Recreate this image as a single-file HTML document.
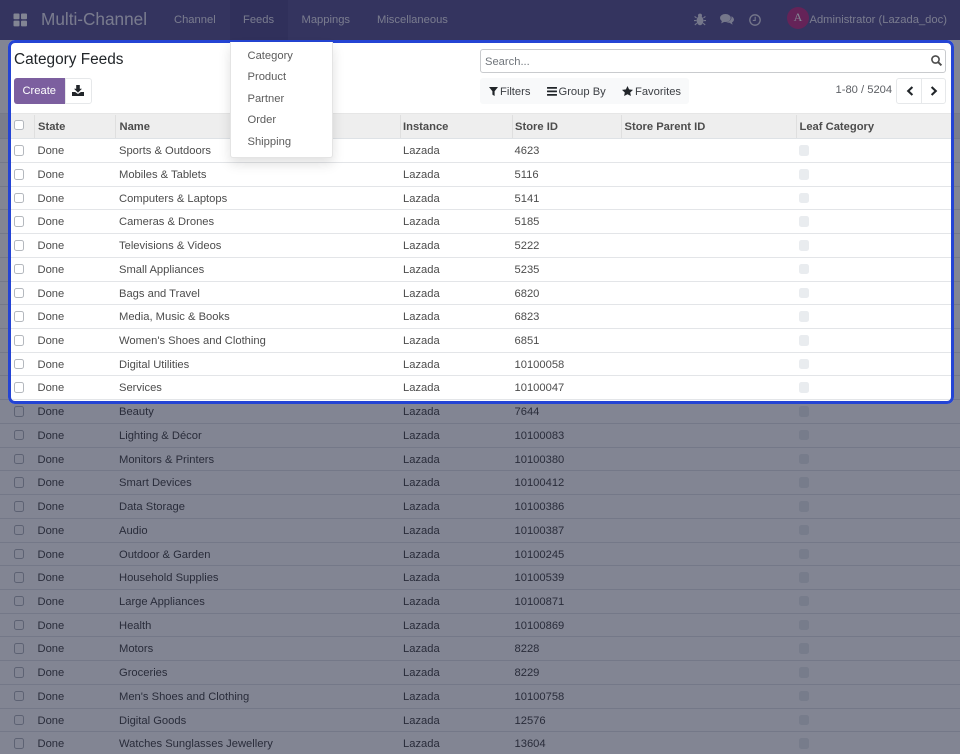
<!DOCTYPE html>
<html><head><meta charset="utf-8"><title>Category Feeds</title>
<style>
html,body{margin:0;padding:0;width:960px;height:754px;overflow:hidden;background:#fff}
*{box-sizing:border-box}
body{font-family:"Liberation Sans",sans-serif;font-size:11.2px;color:#4c4c4c;position:relative}
.abs,.abs2{position:absolute;white-space:nowrap}
#nav{position:absolute;left:0;top:0;width:960px;height:40px;background:#625c96;color:#fff}
#nav .abs{font-size:11.2px;line-height:41px;top:0;color:#eceaf4}
#t{position:absolute;left:0;top:139.3px;width:960px}
.r{height:23.73px;border-bottom:1px solid #e3e5e8;position:relative;background:#fff;line-height:24.6px}
.r span{position:absolute;top:0;white-space:nowrap}
.r .a{left:37.5px}.r .b{left:119px}.r .c{left:403px}.r .d{left:514.5px}
.cb{position:absolute;left:13.5px;top:6px;width:10.5px;height:10.5px;border:1px solid #b4b8be;border-radius:2.5px;background:#fff}
.lf{position:absolute;left:798.5px;top:6px;width:10.5px;height:10.5px;border-radius:2.5px;background:#e9ecef}
#h{position:absolute;left:0;top:113px;width:960px;height:26px;background:#eee;border-top:1px solid #e6e6e6;border-bottom:1px solid #dee2e6;font-weight:bold;line-height:26px;color:#4c4c4c}
#h span{position:absolute;top:0}
#h i{position:absolute;top:1px;height:23px;width:1px;background:#dfdfdf}
#dim{position:absolute;left:8px;top:40px;width:945.5px;height:363.5px;border:3px solid #2444d4;border-radius:7px;box-shadow:0 0 0 1200px rgba(5,12,40,.5);z-index:5}
#dd{position:absolute;left:230px;top:42px;width:102.5px;height:116px;background:#fff;border:1px solid #e4e4e4;border-top:0;border-radius:0 0 3px 3px;box-shadow:0 6px 12px rgba(0,0,0,.12);z-index:6;color:#5c5c5c}
#dd div{position:absolute;left:16.5px;line-height:21px;height:21px}
.btn{position:absolute;border:1px solid #e6e8ea;background:#fff}
</style></head><body>

<div id="nav">
  <svg class="abs2" style="left:13px;top:13px" width="15" height="14" viewBox="0 0 15 14" fill="#fff"><rect x="0.5" y="0.5" width="6" height="5.8" rx="1"/><rect x="8" y="0.5" width="6" height="5.8" rx="1"/><rect x="0.5" y="7.6" width="6" height="5.8" rx="1"/><rect x="8" y="7.6" width="6" height="5.8" rx="1"/></svg>
  <div class="abs" style="left:41px;font-size:17.2px;line-height:39px">Multi-Channel</div>
  <div class="abs" style="left:174px">Channel</div>
  <div class="abs2" style="left:230px;top:0;width:58px;height:40px;background:#5a548e"></div>
  <div class="abs" style="left:243px">Feeds</div>
  <div class="abs" style="left:301.5px">Mappings</div>
  <div class="abs" style="left:377px">Miscellaneous</div>
  <svg class="abs2" style="left:694px;top:13px" width="12" height="13" viewBox="0 0 12 13" fill="#e4e2ee"><ellipse cx="6" cy="7.6" rx="3.4" ry="4.6"/><circle cx="6" cy="2.6" r="2"/><path d="M2.6 5L.6 3.4M9.4 5l2-1.6M2.4 7.6H0M9.6 7.6H12M2.8 10.2L.8 12M9.2 10.2l2 1.8" stroke="#e4e2ee" stroke-width="1.1" fill="none"/></svg>
  <svg class="abs2" style="left:720px;top:13px" width="14" height="13" viewBox="0 0 14 13" fill="#e4e2ee"><ellipse cx="5.4" cy="5" rx="5.4" ry="4"/><path d="M2 7.5L1.2 10.4 5 8.5z"/><path d="M11.4 3.2c1.6.8 2.6 2 2.6 3.3 0 1.2-.8 2.2-2 2.9l.6 2.4-3-2c-1.4 0-2.7-.3-3.6-.9 3 0 6-2 5.4-5.7z"/></svg>
  <svg class="abs2" style="left:749px;top:14px" width="12" height="12" viewBox="0 0 12 12" fill="none" stroke="#e4e2ee"><circle cx="6" cy="6" r="5.2" stroke-width="1.3"/><path d="M6.2 2.8V6.4H3.8" stroke-width="1.1"/></svg>
  <div class="abs2" style="left:787px;top:7px;width:22px;height:22px;border-radius:50%;background:#c43a88;color:#fff;font-family:'Liberation Serif',serif;font-size:12px;line-height:21px;text-align:center">A</div>
  <div class="abs" style="left:809.5px">Administrator (Lazada_doc)</div>
</div>

<div class="abs" style="left:14px;top:49.5px;font-size:15.4px;line-height:20px;color:#212529">Category Feeds</div>
<div class="abs2" style="left:14px;top:78px;width:50.5px;height:26px;background:#7c5f9f;border-radius:3px 0 0 3px;color:#fff;text-align:center;line-height:26.5px">Create</div>
<div class="btn" style="left:64.5px;top:78px;width:27px;height:26px;border-radius:0 3px 3px 0"></div>
<svg class="abs2" style="left:72px;top:85px" width="12" height="11" viewBox="0 0 12 11" fill="#212529"><path d="M4.2 0h3.6v3.8h2.2L6 7.6 2 3.8h2.2z"/><path d="M0 7h3.2L6 9l2.8-2H12v4H0z"/></svg>

<div class="abs2" style="left:480px;top:48.5px;width:466px;height:24px;border:1px solid #c9cbce;border-radius:3px;background:#fff"></div>
<div class="abs" style="left:485px;top:50px;line-height:24px;color:#70757b">Search...</div>
<svg class="abs2" style="left:931px;top:55px" width="11" height="11" viewBox="0 0 11 11" fill="none" stroke="#4c4c4c" stroke-width="1.6"><circle cx="4.5" cy="4.5" r="3.6"/><path d="M7.2 7.2L10.4 10.4" stroke-width="1.9"/></svg>

<div class="abs2" style="left:480px;top:78px;width:209px;height:26px;background:#f8f9fa;border-radius:3px"></div>
<svg class="abs2" style="left:489px;top:87px" width="9" height="9" viewBox="0 0 9 9" fill="#212529"><path d="M0 0h9L5.6 4.2V9L3.4 7.6V4.2z"/></svg>
<div class="abs" style="left:500px;top:78.5px;line-height:26px;color:#3c3f44">Filters</div>
<svg class="abs2" style="left:546.5px;top:87px" width="10" height="9" viewBox="0 0 10 9" fill="#212529"><rect width="10" height="1.8" rx=".4"/><rect y="3.5" width="10" height="1.8" rx=".4"/><rect y="7" width="10" height="1.8" rx=".4"/></svg>
<div class="abs" style="left:558.5px;top:78.5px;line-height:26px;color:#3c3f44">Group By</div>
<svg class="abs2" style="left:622px;top:86px" width="11" height="10" viewBox="0 0 11 10" fill="#212529"><path d="M5.5 0l1.6 3.4 3.9.5-2.8 2.6.7 3.5-3.4-1.8L2.1 10l.7-3.5L0 3.9l3.9-.5z"/></svg>
<div class="abs" style="left:635px;top:78.5px;line-height:26px;color:#3c3f44">Favorites</div>

<div class="abs" style="left:835.5px;top:78px;line-height:25px;color:#5c5f64">1-80 / 5204</div>
<div class="btn" style="left:896px;top:78px;width:26px;height:26px;border-radius:3px 0 0 3px"></div>
<div class="btn" style="left:921px;top:78px;width:25px;height:26px;border-radius:0 3px 3px 0"></div>
<svg class="abs2" style="left:906px;top:86px" width="8" height="10" viewBox="0 0 8 10" fill="none" stroke="#212529" stroke-width="2.1"><path d="M6.4 1L2.2 5l4.2 4"/></svg>
<svg class="abs2" style="left:929.5px;top:86px" width="8" height="10" viewBox="0 0 8 10" fill="none" stroke="#212529" stroke-width="2.1"><path d="M1.6 1l4.2 4-4.2 4"/></svg>

<div id="h">
  <div class="cb" style="top:5.5px"></div>
  <i style="left:34px"></i><i style="left:115px"></i><i style="left:399.5px"></i><i style="left:511.5px"></i><i style="left:620.5px"></i><i style="left:795.5px"></i>
  <span style="left:38px">State</span><span style="left:119.5px">Name</span><span style="left:403px">Instance</span><span style="left:515px">Store ID</span><span style="left:624.5px">Store Parent ID</span><span style="left:799.5px">Leaf Category</span>
</div>

<div id="t">
<div class="r"><div class="cb"></div><span class="a">Done</span><span class="b">Sports &amp; Outdoors</span><span class="c">Lazada</span><span class="d">4623</span><div class="lf"></div></div>
<div class="r"><div class="cb"></div><span class="a">Done</span><span class="b">Mobiles &amp; Tablets</span><span class="c">Lazada</span><span class="d">5116</span><div class="lf"></div></div>
<div class="r"><div class="cb"></div><span class="a">Done</span><span class="b">Computers &amp; Laptops</span><span class="c">Lazada</span><span class="d">5141</span><div class="lf"></div></div>
<div class="r"><div class="cb"></div><span class="a">Done</span><span class="b">Cameras &amp; Drones</span><span class="c">Lazada</span><span class="d">5185</span><div class="lf"></div></div>
<div class="r"><div class="cb"></div><span class="a">Done</span><span class="b">Televisions &amp; Videos</span><span class="c">Lazada</span><span class="d">5222</span><div class="lf"></div></div>
<div class="r"><div class="cb"></div><span class="a">Done</span><span class="b">Small Appliances</span><span class="c">Lazada</span><span class="d">5235</span><div class="lf"></div></div>
<div class="r"><div class="cb"></div><span class="a">Done</span><span class="b">Bags and Travel</span><span class="c">Lazada</span><span class="d">6820</span><div class="lf"></div></div>
<div class="r"><div class="cb"></div><span class="a">Done</span><span class="b">Media, Music &amp; Books</span><span class="c">Lazada</span><span class="d">6823</span><div class="lf"></div></div>
<div class="r"><div class="cb"></div><span class="a">Done</span><span class="b">Women's Shoes and Clothing</span><span class="c">Lazada</span><span class="d">6851</span><div class="lf"></div></div>
<div class="r"><div class="cb"></div><span class="a">Done</span><span class="b">Digital Utilities</span><span class="c">Lazada</span><span class="d">10100058</span><div class="lf"></div></div>
<div class="r"><div class="cb"></div><span class="a">Done</span><span class="b">Services</span><span class="c">Lazada</span><span class="d">10100047</span><div class="lf"></div></div>
<div class="r"><div class="cb"></div><span class="a">Done</span><span class="b">Beauty</span><span class="c">Lazada</span><span class="d">7644</span><div class="lf"></div></div>
<div class="r"><div class="cb"></div><span class="a">Done</span><span class="b">Lighting &amp; Décor</span><span class="c">Lazada</span><span class="d">10100083</span><div class="lf"></div></div>
<div class="r"><div class="cb"></div><span class="a">Done</span><span class="b">Monitors &amp; Printers</span><span class="c">Lazada</span><span class="d">10100380</span><div class="lf"></div></div>
<div class="r"><div class="cb"></div><span class="a">Done</span><span class="b">Smart Devices</span><span class="c">Lazada</span><span class="d">10100412</span><div class="lf"></div></div>
<div class="r"><div class="cb"></div><span class="a">Done</span><span class="b">Data Storage</span><span class="c">Lazada</span><span class="d">10100386</span><div class="lf"></div></div>
<div class="r"><div class="cb"></div><span class="a">Done</span><span class="b">Audio</span><span class="c">Lazada</span><span class="d">10100387</span><div class="lf"></div></div>
<div class="r"><div class="cb"></div><span class="a">Done</span><span class="b">Outdoor &amp; Garden</span><span class="c">Lazada</span><span class="d">10100245</span><div class="lf"></div></div>
<div class="r"><div class="cb"></div><span class="a">Done</span><span class="b">Household Supplies</span><span class="c">Lazada</span><span class="d">10100539</span><div class="lf"></div></div>
<div class="r"><div class="cb"></div><span class="a">Done</span><span class="b">Large Appliances</span><span class="c">Lazada</span><span class="d">10100871</span><div class="lf"></div></div>
<div class="r"><div class="cb"></div><span class="a">Done</span><span class="b">Health</span><span class="c">Lazada</span><span class="d">10100869</span><div class="lf"></div></div>
<div class="r"><div class="cb"></div><span class="a">Done</span><span class="b">Motors</span><span class="c">Lazada</span><span class="d">8228</span><div class="lf"></div></div>
<div class="r"><div class="cb"></div><span class="a">Done</span><span class="b">Groceries</span><span class="c">Lazada</span><span class="d">8229</span><div class="lf"></div></div>
<div class="r"><div class="cb"></div><span class="a">Done</span><span class="b">Men's Shoes and Clothing</span><span class="c">Lazada</span><span class="d">10100758</span><div class="lf"></div></div>
<div class="r"><div class="cb"></div><span class="a">Done</span><span class="b">Digital Goods</span><span class="c">Lazada</span><span class="d">12576</span><div class="lf"></div></div>
<div class="r"><div class="cb"></div><span class="a">Done</span><span class="b">Watches Sunglasses Jewellery</span><span class="c">Lazada</span><span class="d">13604</span><div class="lf"></div></div>
</div>

<div id="dim"></div>
<div id="dd">
  <div style="top:3.5px">Category</div>
  <div style="top:25px">Product</div>
  <div style="top:46.5px">Partner</div>
  <div style="top:68px">Order</div>
  <div style="top:89.5px">Shipping</div>
</div>
</body></html>
